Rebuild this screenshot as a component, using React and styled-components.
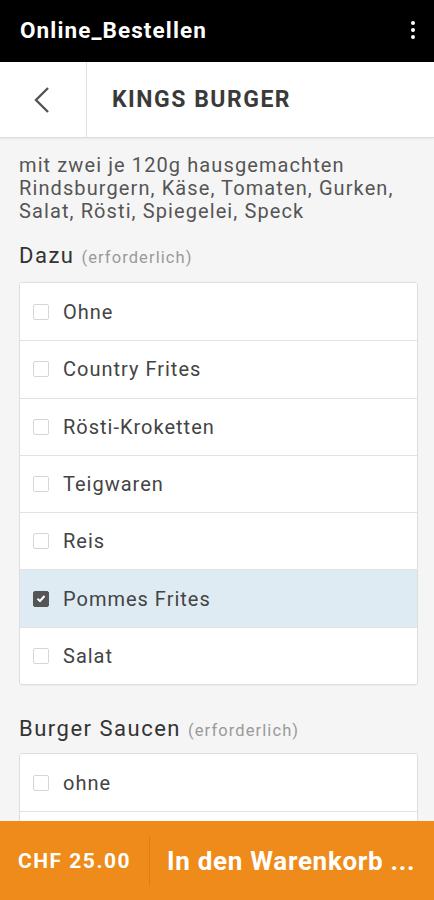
import React from "react";
import styled, { createGlobalStyle } from "styled-components";

const Global = createGlobalStyle`
  html, body { margin: 0; padding: 0; background: #f5f5f5; }
  body { font-family: Roboto, "Liberation Sans", Arial, sans-serif; }
  * { box-sizing: border-box; }
`;

const Page = styled.div`
  min-height: 900px;
  background: #f5f5f5;
  padding-bottom: 100px;
`;

const TopBar = styled.div`
  height: 62px;
  background: #000;
  display: flex;
  align-items: center;
  justify-content: space-between;
  padding: 0 20px 2px 20px;
`;

const AppTitle = styled.div`
  color: #fff;
  font-size: 22.5px;
  font-weight: 700;
  letter-spacing: 1.1px;
`;

const Kebab = styled.div`
  display: flex;
  flex-direction: column;
  gap: 2.5px;
  margin-right: -1px;
  span {
    width: 4.5px;
    height: 4.5px;
    border-radius: 50%;
    background: #fff;
  }
`;

const Header = styled.div`
  height: 76px;
  background: #fff;
  display: flex;
  align-items: stretch;
  border-bottom: 1px solid #dcdcdc;
  box-shadow: 0 1px 2px rgba(0, 0, 0, 0.06);
`;

const BackCell = styled.div`
  width: 87px;
  border-right: 1px solid #e2e2e2;
  display: flex;
  align-items: center;
  justify-content: center;
`;

const HeaderTitle = styled.div`
  display: flex;
  align-items: center;
  padding-left: 25px;
  font-size: 23px;
  font-weight: 700;
  color: #3a3a3a;
  letter-spacing: 1.5px;
`;

const Content = styled.div`
  padding: 16px 12px 0 19px;
`;

const Description = styled.p`
  margin: 0;
  font-size: 20px;
  line-height: 23px;
  color: #555;
  letter-spacing: 1.1px;
`;

const SectionTitle = styled.div`
  margin-top: ${(p) => p.$top}px;
  font-size: 22px;
  line-height: 28px;
  color: #333;
  letter-spacing: 1.5px;
  small {
    font-size: 16.5px;
    color: #9a9a9a;
    letter-spacing: 1.1px;
  }
`;

const List = styled.div`
  margin-top: ${(p) => p.$top}px;
  margin-right: 4px;
  background: #fff;
  border: 1px solid #dedede;
  border-radius: 3px;
  box-shadow: 0 1px 1px rgba(0, 0, 0, 0.04);
  overflow: hidden;
`;

const Row = styled.div`
  height: 57.3px;
  display: flex;
  align-items: center;
  padding-left: 13px;
  gap: 14px;
  background: ${(p) => (p.$selected ? "#dfebf3" : "#fff")};
  border-top: ${(p) => (p.$first ? "none" : "1px solid #e2e2e2")};
  font-size: 20px;
  letter-spacing: 1px;
  color: #444;
`;

const Box = styled.span`
  width: 16px;
  height: 16px;
  border-radius: 2px;
  border: 1px solid ${(p) => (p.$checked ? "#555" : "#d6d6d6")};
  background: ${(p) => (p.$checked ? "#555" : "#fff")};
  display: flex;
  align-items: center;
  justify-content: center;
  flex-shrink: 0;
`;

const BottomBar = styled.div`
  position: fixed;
  left: 0;
  right: 0;
  bottom: 0;
  height: 79px;
  background: #ef8b1a;
  display: flex;
  align-items: center;
  color: #fff;
  font-weight: 700;
  white-space: nowrap;
`;

const Price = styled.div`
  font-size: 21px;
  letter-spacing: 1.5px;
  padding-left: 18px;
  width: 150px;
  border-right: 1px solid #e07d10;
  height: 50px;
  display: flex;
  align-items: center;
`;

const CartLabel = styled.div`
  font-size: 26px;
  padding-left: 17px;
  letter-spacing: 0.7px;
`;

const dazu = ["Ohne", "Country Frites", "Rösti-Kroketten", "Teigwaren", "Reis", "Pommes Frites", "Salat"];
const saucen = ["ohne", "Ketchup", "Mayonnaise", "Cocktail"];

function Option({ label, checked, first }) {
  return (
    <Row $selected={checked} $first={first}>
      <Box $checked={checked}>
        {checked && (
          <svg width="10" height="9" viewBox="0 0 10 9">
            <path d="M1.5 4.8 L4 7 L8.5 2" fill="none" stroke="#fff" strokeWidth="2" />
          </svg>
        )}
      </Box>
      {label}
    </Row>
  );
}

export default function App() {
  return (
    <Page>
      <Global />
      <TopBar>
        <AppTitle>Online_Bestellen</AppTitle>
        <Kebab>
          <span />
          <span />
          <span />
        </Kebab>
      </TopBar>
      <Header>
        <BackCell>
          <svg width="20" height="28" viewBox="0 0 20 28">
            <path d="M15 2 L3 14 L15 26" fill="none" stroke="#555" strokeWidth="2.4" />
          </svg>
        </BackCell>
        <HeaderTitle>KINGS BURGER</HeaderTitle>
      </Header>
      <Content>
        <Description>
          mit zwei je 120g hausgemachten Rindsburgern, Käse, Tomaten, Gurken, Salat, Rösti, Spiegelei, Speck
        </Description>
        <SectionTitle $top={19}>
          Dazu <small>(erforderlich)</small>
        </SectionTitle>
        <List $top={10}>
          {dazu.map((d, i) => (
            <Option key={d} label={d} checked={d === "Pommes Frites"} first={i === 0} />
          ))}
        </List>
        <SectionTitle $top={30}>
          Burger Saucen <small>(erforderlich)</small>
        </SectionTitle>
        <List $top={8}>
          {saucen.map((d, i) => (
            <Option key={d} label={d} checked={false} first={i === 0} />
          ))}
        </List>
      </Content>
      <BottomBar>
        <Price>CHF 25.00</Price>
        <CartLabel>In den Warenkorb ...</CartLabel>
      </BottomBar>
    </Page>
  );
}
